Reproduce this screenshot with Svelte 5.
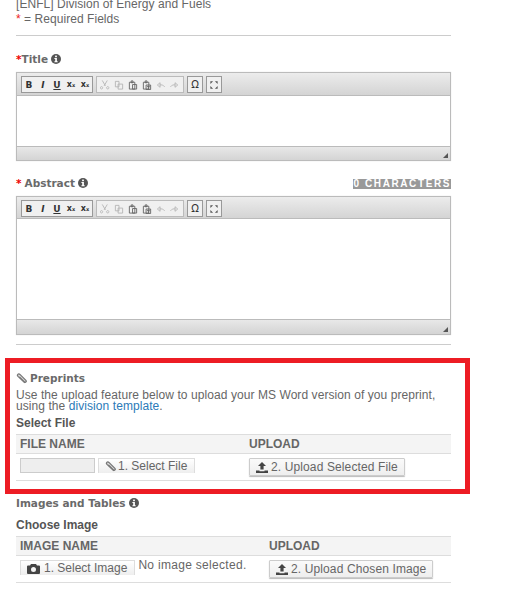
<script>
	let disabled_icons = [
		{ name: 'cut', d: 'M2.500 .5l3.500 6M8 .5L4.500 6.500M3 8.500a1.300 1.300 0 1 0 0 .1M9.800 8.500a1.300 1.300 0 1 0 0 .1' },
		{ name: 'copy', d: 'M1.500 1.500h4v6h-4zM4.500 4.500h5v5.500h-5z' },
		{ name: 'paste', d: 'M1.500 2.500h6v7.500h-6zM3.500 1h2v2h-2zM5 5h4.500v5H5z', dark: true },
		{ name: 'pastetext', d: 'M1.500 2.500h6v7.500h-6zM3.500 1h2v2h-2zM4.500 5.500h5v5h-5zM5.500 7h3M7 7v3', dark: true },
		{ name: 'undo', d: 'M9.500 7.500C8 5.500 6 5 4 5.500M4.500 3L1.500 5.500 4.500 8z' },
		{ name: 'redo', d: 'M.5 7.500C2 5.500 4 5 6 5.500M5.500 3l3 2.500-3 2.500z' }
	];
</script>

{#snippet info()}
	<svg class="info" viewBox="0 0 10 10" aria-hidden="true">
		<circle cx="5" cy="5" r="5" fill="#555" />
		<rect x="4.100" y="1.600" width="1.800" height="1.600" fill="#fff" />
		<path d="M3.400 4h2.500v3.200h.8v1H3.400v-1h.8V5h-.8z" fill="#fff" />
	</svg>
{/snippet}

{#snippet clip()}
	<svg class="clip" viewBox="0 0 11 11" aria-hidden="true">
		<path d="M8.800 9.800L2 3.400C.6 2 2.400 0 3.900 1.400l6 6c1 1.100-.3 2.400-1.400 1.500L3.400 3.900" fill="#ddd" stroke="#777" stroke-width="1.300" />
	</svg>
{/snippet}

{#snippet upload()}
	<svg class="upload" viewBox="0 0 12 11" aria-hidden="true">
		<path d="M6 0l4 4H7.600v3.500H4.400V4H2zM0 8.500h3.500v.8h5v-.8H12V11H0z" fill="#444" />
	</svg>
{/snippet}

{#snippet toolbar()}
	<div class="toolbar">
		<div class="group">
			<span class="tool bold">B</span>
			<span class="tool ital">I</span>
			<span class="tool under">U</span>
			<span class="tool script">x<sub>x</sub></span>
			<span class="tool script">x<sup>x</sup></span>
		</div>
		<div class="group off">
			{#each disabled_icons as icon (icon.name)}
				<span class="tool">
					<svg class="tool_icon" viewBox="0 0 11 11" aria-hidden="true">
						<path d={icon.d} fill="none" stroke={icon.dark ? '#666' : '#b5b5b5'} stroke-width="1" />
					</svg>
				</span>
			{/each}
		</div>
		<div class="group"><span class="tool omega">Ω</span></div>
		<div class="group">
			<span class="tool">
				<svg class="tool_icon" viewBox="0 0 11 11" aria-hidden="true">
					<path d="M1.500 1.500h3l-3 3zM9.500 1.500v3l-3-3zM1.500 9.500v-3l3 3zM9.500 9.500h-3l3-3z" fill="#555" />
				</svg>
			</span>
		</div>
	</div>
{/snippet}

{#snippet editor(size)}
	<div class="editor {size}">
		{@render toolbar()}
		<div class="area"></div>
		<div class="status"><span class="grip"></span></div>
	</div>
{/snippet}

<main class="page">
	<p class="intro">[ENFL] Division of Energy and Fuels<br /><span class="req">*</span> = Required Fields</p>
	<hr />

	<div class="label title_label"><span class="req_b">*</span>Title {@render info()}</div>
	{@render editor('short')}

	<div class="label_row">
		<div class="label"><span class="req_b">*</span> Abstract {@render info()}</div>
		<span class="count">0 CHARACTERS</span>
	</div>
	{@render editor('tall')}
	<hr class="after_abstract" />

	<section class="preprints">
		<div class="label">{@render clip()} Preprints</div>
		<p class="blurb">Use the upload feature below to upload your MS Word version of you preprint, using the <a href="#top">division template</a>.</p>
		<div class="sub">Select File</div>
		<div class="table file_cols">
			<div class="th">FILE NAME</div>
			<div class="th">UPLOAD</div>
			<div class="td">
				<span class="fake_input"></span>
				<span class="picker">{@render clip()} 1. Select File</span>
			</div>
			<div class="td"><span class="btn">{@render upload()} 2. Upload Selected File</span></div>
		</div>
		<div class="highlight"></div>
	</section>

	<section class="images">
		<div class="label">Images and Tables {@render info()}</div>
		<div class="sub">Choose Image</div>
		<div class="table image_cols">
			<div class="th">IMAGE NAME</div>
			<div class="th">UPLOAD</div>
			<div class="td">
				<span class="picker">
					<svg class="camera" viewBox="0 0 13 11" aria-hidden="true">
						<path fill-rule="evenodd" d="M4 1h5l1 1.500h2a1 1 0 0 1 1 1V10a1 1 0 0 1-1 1H1a1 1 0 0 1-1-1V3.500a1 1 0 0 1 1-1h2zM6.500 4a2.500 2.500 0 1 0 0 5 2.500 2.500 0 0 0 0-5z" fill="#444" />
					</svg>
					1. Select Image</span>
				<span class="none">No image selected.</span>
			</div>
			<div class="td"><span class="btn">{@render upload()} 2. Upload Chosen Image</span></div>
		</div>
	</section>
</main>

<style>
	:global(body) {
		margin: 0;
		background: #fff;
		overflow: hidden;
	}

	.page {
		width: 435px;
		margin-left: 16px;
		height: 593px;
		font-family: "Liberation Sans", Arial, sans-serif;
		font-size: 12px;
		color: #666;
	}

	.intro {
		margin: -3px 0 0;
		line-height: 15px;
		letter-spacing: .05px;
	}

	.req { color: #e22; }

	hr {
		border: 0;
		border-top: 1px solid #ccc;
		margin: 8px 0 0;
	}

	.label {
		font-family: "DejaVu Sans", sans-serif;
		font-size: 10.500px;
		font-weight: 600;
		color: #6a6a6a;
		line-height: 14px;
		display: flex;
		align-items: center;
		gap: 3px;
	}

	.req_b { color: #e00; }

	.title_label {
		margin-top: 16px;
		margin-bottom: 6px;
	}

	.title_label .req_b { margin-right: -3px; }

	.info {
		width: 10px;
		height: 10px;
	}

	.label_row {
		display: flex;
		justify-content: space-between;
		align-items: center;
		margin-top: 15px;
		margin-bottom: 6px;
	}

	.count {
		margin-top: 2px;
		background: #999;
		color: #fff;
		font-size: 10px;
		font-weight: 700;
		line-height: 10px;
		letter-spacing: 1.600px;
		white-space: nowrap;
	}

	.editor {
		border: 1px solid #bbb;
		box-shadow: 0 0 1px #ddd;
	}

	.toolbar {
		display: flex;
		gap: 3px;
		box-sizing: border-box;
		height: 23px;
		padding: 3px 4px;
		background: linear-gradient(#ececec, #d4d4d4);
		border-bottom: 1px solid #bbb;
	}

	.editor.tall .toolbar { height: 22px; }

	.group {
		display: flex;
		align-items: center;
		height: 15px;
		border: 1px solid #999;
		background: #f0f0f0;
	}

	.group.off {
		border-color: #bbb;
		padding: 0 1px;
	}

	.tool {
		width: 14px;
		height: 15px;
		display: flex;
		align-items: center;
		justify-content: center;
		font-size: 9px;
		color: #333;
		font-family: "DejaVu Sans", sans-serif;
		font-weight: 700;
	}

	.ital { font-style: italic; }
	.under { text-decoration: underline; }
	.script { font-size: 8px; }
	.script sub, .script sup { font-size: 5px; line-height: 0; }
	.omega { font-size: 10px; font-weight: 400; }

	.tool_icon {
		width: 10px;
		height: 10px;
	}

	.area { background: #fff; }
	.editor.short .area { height: 50px; }
	.editor.tall .area { height: 100px; }

	.status {
		position: relative;
		height: 13px;
		background: linear-gradient(#e8e8e8, #d4d4d4);
		border-top: 1px solid #bbb;
	}

	.editor.tall .status { height: 14px; }

	.grip {
		position: absolute;
		right: 2px;
		bottom: 2px;
		width: 0;
		height: 0;
		border-left: 5px solid transparent;
		border-bottom: 5px solid #555;
	}

	.after_abstract { margin-top: 9px; }

	.preprints {
		position: relative;
		margin-top: 26px;
	}

	.clip {
		width: 11px;
		height: 11px;
	}

	.blurb {
		margin: 5px 0 0;
		line-height: 11px;
		letter-spacing: .07px;
	}

	a {
		color: #2b7ab8;
		text-decoration: none;
	}

	.sub {
		margin-top: 4px;
		font-weight: 700;
		line-height: 14px;
		color: #555;
	}

	.table {
		display: grid;
		margin-top: 4px;
		border-bottom: 1px solid #ddd;
	}

	.file_cols { grid-template-columns: 233px 1fr; }
	.image_cols { grid-template-columns: 253px 1fr; }

	.th {
		box-sizing: border-box;
		height: 20px;
		line-height: 18px;
		padding-left: 4px;
		border-top: 1px solid #ddd;
		border-bottom: 1px solid #ddd;
		background: #f4f4f4;
		font-weight: 700;
		color: #666;
	}

	.th:nth-child(2) { padding-left: 0; }

	.td {
		display: flex;
		align-items: flex-start;
		height: 26px;
		padding-top: 4px;
		box-sizing: border-box;
	}

	.td:nth-child(3) {
		padding-left: 4px;
		gap: 3px;
	}

	.fake_input {
		box-sizing: border-box;
		width: 75px;
		height: 15px;
		background: #eee;
		border: 1px solid #ccc;
	}

	.picker {
		box-sizing: border-box;
		display: inline-flex;
		align-items: center;
		gap: 2px;
		height: 15px;
		padding: 0 7px 0 6px;
		background: linear-gradient(#fff, #eee);
		border: 1px solid #ddd;
		border-bottom: 0;
		line-height: 14px;
		white-space: nowrap;
	}

	.btn {
		box-sizing: border-box;
		display: inline-flex;
		align-items: center;
		gap: 3px;
		height: 18px;
		padding: 0 6px;
		background: linear-gradient(#fafafa, #eee);
		border: 1px solid #ccc;
		border-radius: 1px;
		box-shadow: 0 1px 1px #bbb;
		white-space: nowrap;
		letter-spacing: .12px;
	}

	.upload {
		width: 12px;
		height: 11px;
	}

	.camera {
		width: 13px;
		height: 11px;
		margin-right: 2px;
	}

	.none {
		line-height: 11px;
		letter-spacing: .3px;
	}

	/* the red annotation frame drawn on top of the section */
	.highlight {
		position: absolute;
		top: -13px;
		left: -11px;
		width: 465px;
		height: 136px;
		box-sizing: border-box;
		border: 5px solid #ed1c24;
		pointer-events: none;
	}

	.images { margin-top: 15px; }

	.images .sub { margin-top: 8px; }
</style>
